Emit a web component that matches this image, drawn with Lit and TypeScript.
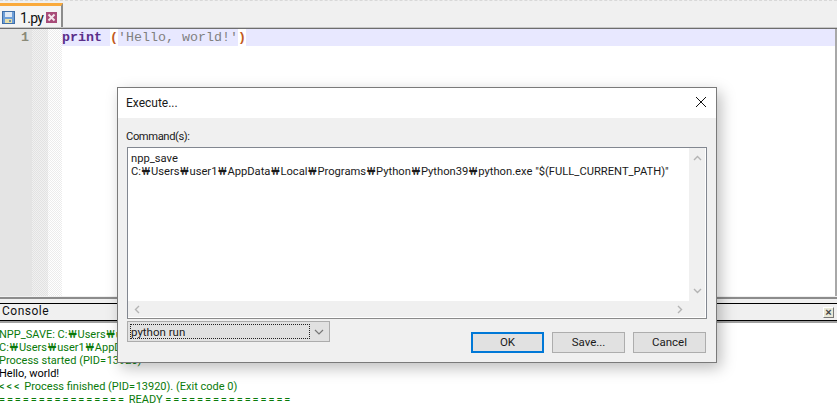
import { LitElement, html, css } from "lit";
import { customElement } from "lit/decorators.js";

const won = html`<span class="won">₩</span>`;
const conWon = html`<span class="cwon">₩</span>`;

@customElement("app-root")
export class AppRoot extends LitElement {
  static styles = css`
    :host { display: block; width: 837px; height: 416px; position: relative; overflow: hidden; background: #fff; font-family: Roboto, "Noto Sans", sans-serif; }
    .page { display: flex; flex-direction: column; height: 416px; }
    .tabbar { height: 27px; flex: none; background: #f0f0f0; border-top: 1px dashed #d8d8d8; box-sizing: border-box; display: flex; align-items: flex-end; }
    .tab { width: 63px; height: 24px; box-sizing: border-box; background: #f4f4f4; border-top: 3px solid #faaa3c; border-right: 2px solid #8c8c8c; display: flex; align-items: center; padding: 2px 0 0 2px; gap: 5px; font-size: 14px; letter-spacing: -0.7px; color: #111; }
    .tab span { width: 21px; }
    .rule { height: 2px; flex: none; background: #6e6e6e; border-top: 1px solid #c8c8c8; box-sizing: border-box; }
    .editor { height: 267px; flex: none; display: flex; }
    .gutter { width: 32px; background: #e4e4e4; color: #8a8a78; font: bold 13.33px/18px "Liberation Mono", monospace; text-align: right; padding-right: 3px; box-sizing: border-box; }
    .fold { width: 16px; background: #ececec repeating-conic-gradient(#e2e2e2 0 25%, #f1f1f1 0 50%) 0 0 / 2px 2px; }
    .fold2 { width: 14px; background: #fff repeating-conic-gradient(#ececec 0 25%, #fff 0 50%) 0 0 / 2px 2px; }
    .code { flex: 1; border-right: 2px solid #a8a8a8; background: #fff; }
    .line { height: 17px; background: #e8e8ff; font: 13.33px/18px "Liberation Mono", monospace; white-space: pre; color: #808080; }
    .kw { color: #5a2e8a; font-weight: bold; }
    .br { background: #fff; color: #c25a1e; font-weight: bold; display: inline-block; height: 17px; }
    .pane-sep { height: 7px; flex: none; background: linear-gradient(#f0f0f0 1px, #8c8c8c 1px 3px, #f0f0f0 3px); }
    .chead { height: 16px; flex: none; background: #f0f0f0; border-top: 1px solid #000; border-bottom: 1px solid #000; display: flex; align-items: center; justify-content: space-between; padding: 0 3px 0 2px; font-size: 12px; letter-spacing: 0.5px; color: #111; }
    .chead .title { margin-bottom: 2px; }
    .cx { width: 9px; height: 9px; background: #e8e8d8; border: 1px solid; border-color: #fff #777 #777 #fff; font: bold 11px/9px "Liberation Sans", sans-serif; text-align: center; color: #444; letter-spacing: 0; }
    .console { flex: 1; border-top: 2px solid #a0a0a0; padding-top: 5px; font-size: 11px; line-height: 13px; color: #0a7a0a; white-space: pre; margin-left: -1px; }
    .console .out { color: #000; }
    .w { letter-spacing: 1.9px; }
    .eq { letter-spacing: 0.6px; }
    .cwon { padding: 0 1px; }
    .dialog { position: absolute; left: 117px; top: 87px; width: 600px; height: 276px; box-sizing: border-box; background: #f0f0f0; border: 1px solid #7a7a7a; box-shadow: 4px 5px 14px rgba(0,0,0,0.26); font-size: 11.5px; color: #1a1a1a; display: flex; flex-direction: column; }
    .dtitle { height: 30px; flex: none; background: #fff; display: flex; align-items: center; justify-content: space-between; padding: 0 10px 0 8px; font-size: 12px; }
    .dtitle svg { margin-bottom: 2px; }
    .dbody { flex: 1; padding: 9px 9px 10px; display: flex; flex-direction: column; }
    .label { height: 20px; line-height: 19px; margin-left: -1px; font-size: 11.2px; letter-spacing: -0.4px; }
    .box { height: 172px; flex: none; box-sizing: border-box; border: 1px solid #828790; border-bottom-color: #8a8a8a; background: #f0f0f0; padding: 0 1px 1px 0; box-shadow: inset -1px -1px 0 #fff; display: grid; grid-template-columns: minmax(0, 1fr) 16px; grid-template-rows: minmax(0, 1fr) 16px; }
    .text { background: #fff; padding: 4px 3px; line-height: 13px; white-space: pre; overflow: hidden; font-size: 11.2px; }
    .won { padding: 0 0.85px; }
    .vs { display: flex; flex-direction: column; justify-content: space-between; align-items: center; padding: 6px 0; }
    .hs { display: flex; justify-content: space-between; align-items: center; padding: 0 5px; }
    .row { display: flex; justify-content: space-between; flex: 1; }
    .combo { width: 203px; height: 21px; margin-top: 2px; box-sizing: border-box; border: 1px solid #acacac; background: #e1e1e1; display: flex; align-items: center; justify-content: space-between; padding: 0 5px 0 2px; }
    .sel { width: 180px; height: 15px; line-height: 14px; box-sizing: border-box; border: 1px dotted #222; }
    .btns { display: flex; gap: 8px; margin-top: 13px; align-items: flex-start; padding-right: 1px; }
    .btn { width: 73px; height: 21px; box-sizing: border-box; background: #e1e1e1; border: 1px solid #adadad; text-align: center; line-height: 19px; }
    .btn.def { border: 2px solid #0078d7; line-height: 17px; }
    svg { display: block; flex: none; }
  `;

  private arrow(d: string) {
    return html`<svg width="9" height="9" viewBox="0 0 9 9"><path d=${d} fill="none" stroke="#b4b4b4" stroke-width="1.4"/></svg>`;
  }

  render() {
    return html`
      <div class="page">
        <div class="tabbar">
          <div class="tab">
            <svg width="13" height="13" viewBox="0 0 13 13">
              <rect x="0.5" y="0.5" width="12" height="12" fill="#6f9fd8" stroke="#3f6fa8"/>
              <rect x="3" y="1" width="7" height="5" fill="#dfe9f5"/>
              <rect x="3" y="8" width="7" height="4" fill="#e8dfa8"/>
              <rect x="7" y="9" width="2" height="2" fill="#6f8fb0"/>
            </svg>
            <span>1.py</span>
            <svg width="11" height="11" viewBox="0 0 11 11">
              <rect width="11" height="11" fill="#a84c78"/>
              <path d="M2.5 2.5l6 6M8.5 2.5l-6 6" stroke="#f2e6ec" stroke-width="2"/>
            </svg>
          </div>
        </div>
        <div class="rule"></div>
        <div class="editor">
          <div class="gutter">1</div>
          <div class="fold"></div>
          <div class="fold2"></div>
          <div class="code">
            <div class="line"><span class="kw">print</span> <span class="br">(</span><span>'Hello, world!'</span><span class="br">)</span></div>
          </div>
        </div>
        <div class="pane-sep"></div>
        <div class="chead"><span class="title">Console</span><span class="cx">×</span></div>
        <div class="console"><div>NPP_SAVE: C:${conWon}Users${conWon}user1${conWon}AppData</div><div>C:${conWon}Users${conWon}user1${conWon}AppData${conWon}Local</div><div>Process started (PID<span class="eq">=</span>13920) &gt;&gt;&gt;</div><div class="out">Hello, world!</div><div><span class="w">&lt;&lt;&lt;</span> Process finished (PID<span class="eq">=</span>13920). (Exit code 0)</div><div><span class="w">================</span> READY <span class="w">================</span></div></div>
      </div>
      <div class="dialog">
        <div class="dtitle">
          <span>Execute...</span>
          <svg width="10" height="10" viewBox="0 0 10 10"><path d="M0 0l10 10M10 0L0 10" stroke="#111" stroke-width="1" fill="none"/></svg>
        </div>
        <div class="dbody">
          <div class="label">Command(s):</div>
          <div class="box">
            <div class="text">npp_save
C:${won}Users${won}user1${won}AppData${won}Local${won}Programs${won}Python${won}Python39${won}python.exe "$(FULL_CURRENT_PATH)"</div>
            <div class="vs">${this.arrow("M1 6l3.5-3.5L8 6")}${this.arrow("M1 3l3.5 3.5L8 3")}</div>
            <div class="hs">${this.arrow("M6 1L2.5 4.5L6 8")}${this.arrow("M3 1l3.5 3.5L3 8")}</div>
            <div></div>
          </div>
          <div class="row">
            <div class="combo"><div class="sel">python run</div><svg width="10" height="8" viewBox="0 0 10 8"><path d="M1 2l4 4 4-4" fill="none" stroke="#777" stroke-width="1.2"/></svg></div>
            <div class="btns"><div class="btn def">OK</div><div class="btn">Save...</div><div class="btn">Cancel</div></div>
          </div>
        </div>
      </div>
    `;
  }
}
